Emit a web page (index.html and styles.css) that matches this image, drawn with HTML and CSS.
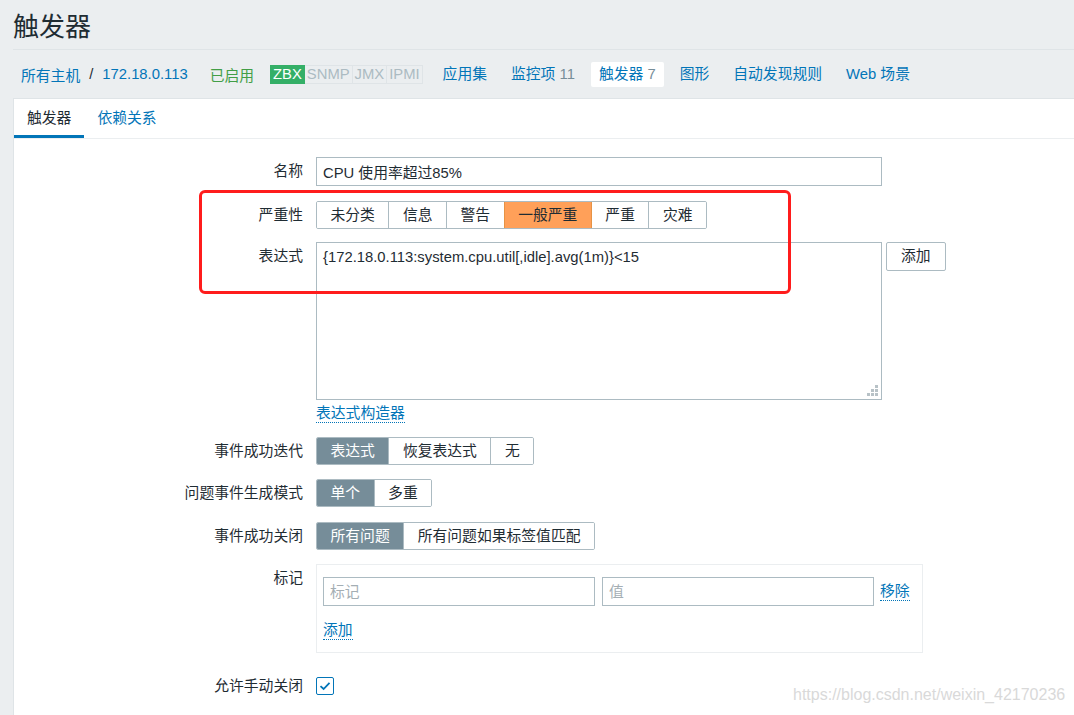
FILE: index.html
```html
<!DOCTYPE html>
<html lang="zh-CN">
<head>
<meta charset="utf-8">
<title>触发器</title>
<link rel="stylesheet" href="styles.css">
</head>
<body>
<header class="page-header"><h1>触发器</h1></header>
<nav class="host-nav">
  <a class="crumb">所有主机</a><span class="sep">/</span><a class="crumb">172.18.0.113</a>
  <span class="status">已启用</span>
  <span class="badges"><span class="badge on">ZBX</span><span class="badge">SNMP</span><span class="badge">JMX</span><span class="badge">IPMI</span></span>
  <a class="nav-link first">应用集</a>
  <a class="nav-link">监控项 <span class="count">11</span></a>
  <a class="nav-link selected">触发器 <span class="count">7</span></a>
  <a class="nav-link">图形</a>
  <a class="nav-link">自动发现规则</a>
  <a class="nav-link">Web 场景</a>
</nav>
<main class="panel">
  <div class="tabs"><span class="tab active">触发器</span><span class="tab">依赖关系</span></div>
  <form class="form">
    <div class="row name-row">
      <label class="lbl">名称</label>
      <div class="ctrl"><input class="text wide" type="text" value="CPU 使用率超过85%"></div>
    </div>
    <div class="row sev-row">
      <label class="lbl">严重性</label>
      <div class="ctrl">
        <div class="seg">
          <span class="seg-btn">未分类</span><span class="seg-btn">信息</span><span class="seg-btn">警告</span><span class="seg-btn avg">一般严重</span><span class="seg-btn">严重</span><span class="seg-btn">灾难</span>
        </div>
      </div>
    </div>
    <div class="row">
      <label class="lbl">表达式</label>
      <div class="ctrl">
        <div class="expr-line">
          <div class="area">{172.18.0.113:system.cpu.util[,idle].avg(1m)}&lt;15<svg class="grip" width="11" height="11" viewBox="0 0 11 11"><rect x="8" y="0" width="3" height="3"/><rect x="4" y="4" width="3" height="3"/><rect x="8" y="4" width="3" height="3"/><rect x="0" y="8" width="3" height="3"/><rect x="4" y="8" width="3" height="3"/><rect x="8" y="8" width="3" height="3"/></svg></div>
          <span class="btn">添加</span>
        </div>
        <a class="dotted builder">表达式构造器</a>
      </div>
    </div>
    <div class="row seg-row">
      <label class="lbl">事件成功迭代</label>
      <div class="ctrl">
        <div class="seg"><span class="seg-btn on">表达式</span><span class="seg-btn">恢复表达式</span><span class="seg-btn">无</span></div>
      </div>
    </div>
    <div class="row seg-row mode-row">
      <label class="lbl">问题事件生成模式</label>
      <div class="ctrl">
        <div class="seg"><span class="seg-btn on">单个</span><span class="seg-btn">多重</span></div>
      </div>
    </div>
    <div class="row seg-row">
      <label class="lbl">事件成功关闭</label>
      <div class="ctrl">
        <div class="seg"><span class="seg-btn on">所有问题</span><span class="seg-btn">所有问题如果标签值匹配</span></div>
      </div>
    </div>
    <div class="row tags-row">
      <label class="lbl">标记</label>
      <div class="ctrl">
        <div class="tagbox">
          <div class="tag-line">
            <input class="text tag" type="text" placeholder="标记">
            <input class="text tag val" type="text" placeholder="值">
            <a class="dotted remove">移除</a>
          </div>
          <a class="dotted add">添加</a>
        </div>
      </div>
    </div>
    <div class="row">
      <label class="lbl">允许手动关闭</label>
      <div class="ctrl">
        <span class="check"><svg width="12" height="10" viewBox="0 0 12 10"><path d="M1.5 5.2 L4.6 8 L10.5 1.8" fill="none" stroke="#0275b8" stroke-width="1.8"/></svg></span>
      </div>
    </div>
    <div class="row">
      <label class="lbl"></label>
      <div class="ctrl"><div class="area short"></div></div>
    </div>
  </form>
</main>
<div class="annot"></div>
<div class="watermark">https://blog.csdn.net/weixin_42170236</div>
</body>
</html>
```
FILE: styles.css
```css
html, body {
  margin: 0;
  padding: 0;
}
body {
  background: #ebeef0;
  font-family: "Liberation Sans", "Noto Sans CJK SC", sans-serif;
  font-size: 14.8px;
  color: #1f2c33;
  width: 1074px;
  height: 715px;
  overflow: hidden;
  position: relative;
}
a { color: #0275b8; text-decoration: none; }

.page-header {
  margin-left: 13px;
  height: 49px;
  border-bottom: 1px solid #dfe4e7;
}
.page-header h1 {
  margin: 0;
  font-size: 26px;
  font-weight: normal;
  line-height: 54px;
  height: 49px;
}

.host-nav {
  height: 48px;
  display: flex;
  align-items: center;
  padding-left: 21px;
  white-space: nowrap;
}
.crumb { color: #0275b8; }
.sep { margin: 0 9px; color: #1f2c33; }
.status { color: #429e47; margin-left: 22px; }
.badges { display: flex; margin-left: 16px; }
.badge {
  display: inline-block;
  padding: 0 2px;
  line-height: 17px;
  border: 1px solid #dfe4e7;
  border-left: none;
  background: #ebeef0;
  color: #acbbc2;
}
.badge.on {
  background: #34af67;
  border: 1px solid #34af67;
  color: #fff;
}
.nav-link {
  padding: 0 8px;
  margin-left: 8px;
  line-height: 25px;
  height: 25px;
}
.nav-link.first { margin-left: 12px; }
.nav-link.selected {
  background: #fff;
  color: #0275b8;
  border-radius: 2px;
}
.count { color: #768d99; }

.panel {
  margin-left: 13px;
  background: #fff;
  border-top: 1px solid #dfe4e7;
  border-left: 1px solid #dfe4e7;
  height: 800px;
}
.tabs {
  display: flex;
  border-bottom: 1px solid #ebeef0;
}
.tab {
  padding: 2px 13px 0 13px;
  line-height: 34px;
  border-bottom: 3px solid transparent;
  color: #0275b8;
}
.tab.active {
  color: #1f2c33;
  border-bottom-color: #0275b8;
}

.form { padding-top: 18px; }
.row {
  display: grid;
  grid-template-columns: 289px 1fr;
  column-gap: 13px;
  margin-bottom: 14px;
}
.name-row { margin-bottom: 15px; }
.sev-row { margin-bottom: 13px; }
.seg-row { margin-bottom: 14px; }
.mode-row { margin-bottom: 15px; }
.lbl {
  text-align: right;
  line-height: 29px;
  white-space: nowrap;
}
.seg-row .lbl, .sev-row .lbl { line-height: 28px; }
.ctrl { display: flex; flex-direction: column; align-items: flex-start; }

.text {
  box-sizing: border-box;
  height: 29px;
  border: 1px solid #acbbc2;
  padding: 0 6px;
  font: inherit;
  color: #1f2c33;
  background: #fff;
  outline: none;
  margin: 0;
}
.text::placeholder { color: #a4aeb4; }
.wide { width: 566px; }

.seg {
  display: flex;
  border: 1px solid #acbbc2;
  border-radius: 2px;
  height: 28px;
  box-sizing: border-box;
  overflow: hidden;
}
.seg-btn {
  padding: 0 13.5px;
  line-height: 26px;
  border-left: 1px solid #acbbc2;
  white-space: nowrap;
  background: #fff;
}
.seg-btn:first-child { border-left: none; }
.seg-btn.avg { background: #ffa059; border-left-color: #e69345; border-right: 1px solid #e69345; }
.seg-btn.avg + .seg-btn { border-left: none; }
.seg-btn.on { background: #768d99; color: #fff; border-left-color: #768d99; }

.expr-line { display: flex; align-items: flex-start; }
.area {
  position: relative;
  box-sizing: border-box;
  width: 566px;
  height: 158px;
  border: 1px solid #acbbc2;
  padding: 5px 6px;
  line-height: 18px;
  background: #fff;
}
.area.short { height: 100px; }
.grip { position: absolute; right: 3px; bottom: 3px; fill: #b8c2c7; }
.btn {
  margin-left: 4px;
  box-sizing: border-box;
  height: 29px;
  line-height: 27px;
  padding: 0 14px;
  border: 1px solid #acbbc2;
  border-radius: 2px;
  background: #fff;
}
.dotted {
  color: #0275b8;
  border-bottom: 1px dotted #0275b8;
  line-height: 17px;
}
.builder { margin-top: 5px; }

.tags-row { margin-bottom: 19px; }
.tagbox {
  box-sizing: border-box;
  width: 607px;
  border: 1px solid #ebeef0;
  padding: 12px 6px 12px 6px;
  display: flex;
  flex-direction: column;
  align-items: flex-start;
}
.tag-line { display: flex; align-items: center; }
.tag { width: 272px; }
.val { margin-left: 7px; }
.remove { margin-left: 6px; }
.add { margin-top: 16px; }

.check {
  margin-top: 5px;
  box-sizing: border-box;
  width: 18px;
  height: 18px;
  border: 1px solid #0275b8;
  border-radius: 2px;
  display: flex;
  align-items: center;
  justify-content: center;
}

.annot {
  position: absolute;
  left: 199px;
  top: 190px;
  width: 592px;
  height: 104px;
  box-sizing: border-box;
  border: 3px solid #ff1c1c;
  border-radius: 6px;
}
.watermark {
  position: absolute;
  left: 793px;
  top: 686px;
  font-family: "Liberation Sans", sans-serif;
  font-size: 16px;
  color: #d9d9d9;
  white-space: nowrap;
}
```
